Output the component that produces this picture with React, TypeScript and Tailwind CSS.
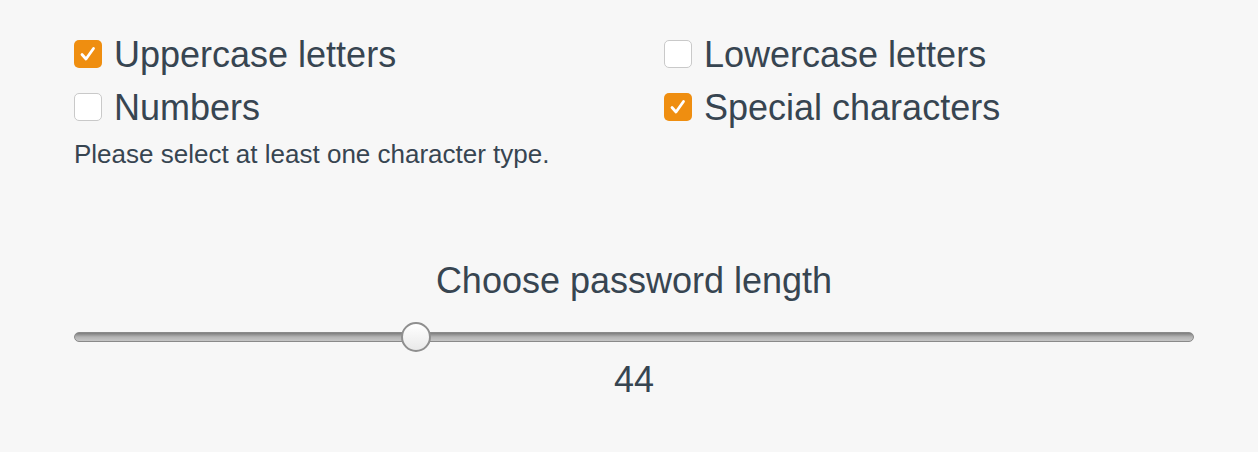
import { useState } from 'react'

const options = [
  { key: 'upper', label: 'Uppercase letters', checked: true },
  { key: 'lower', label: 'Lowercase letters', checked: false },
  { key: 'numbers', label: 'Numbers', checked: false },
  { key: 'special', label: 'Special characters', checked: true },
]

function CheckBox({ checked }: { checked: boolean }) {
  if (checked) {
    return (
      <span className="flex h-[28px] w-[28px] shrink-0 items-center justify-center rounded-[5px] bg-[#ef8e10]">
        <svg width="28" height="28" viewBox="0 0 28 28" fill="none">
          <path
            d="M8 14.5 L12 19 L19.5 8.5"
            stroke="white"
            strokeWidth="2.8"
            strokeLinecap="round"
            strokeLinejoin="round"
          />
        </svg>
      </span>
    )
  }
  return (
    <span className="h-[28px] w-[28px] shrink-0 rounded-[5px] border-[1.5px] border-[#c9c9c9] bg-white" />
  )
}

export default function App() {
  const [length] = useState(44)
  const min = 8
  const max = 128
  const pct = (length - min) / (max - min)

  return (
    <div className="h-[452px] w-full bg-[#f7f7f7] font-['Liberation_Sans',Arial,sans-serif] text-[#374551]">
      <div className="w-[1194px] pl-[74px] pt-[27px]">
        <div className="grid grid-cols-2 gap-x-[60px]">
          {options.map((o) => (
            <label key={o.key} className="flex h-[53px] items-center gap-[12px]">
              <CheckBox checked={o.checked} />
              <span className="pt-[2px] text-[36px] leading-[36px]">{o.label}</span>
            </label>
          ))}
        </div>
        <p className="mt-[8px] text-[26px] leading-[26px]">Please select at least one character type.</p>

        <p className="mt-[96px] text-center text-[36px] leading-[36px]">Choose password length</p>

        {/* slider */}
        <div className="relative mt-[23px] h-[30px]">
          <div className="absolute left-0 right-0 top-[10px] h-[10px] rounded-full border border-[#8a8a8a] bg-gradient-to-b from-[#7d7d7d] via-[#b4b4b4] to-[#c6c6c6]" />
          <div
            className="absolute top-0 h-[30px] w-[30px] rounded-full border-2 border-[#8f8f8f] bg-gradient-to-b from-white to-[#e9e9e9]"
            style={{ left: `calc(${pct} * (100% - 30px))` }}
          />
        </div>

        <p className="mt-[10px] text-center text-[36px] leading-[36px]">{length}</p>
      </div>
    </div>
  )
}
